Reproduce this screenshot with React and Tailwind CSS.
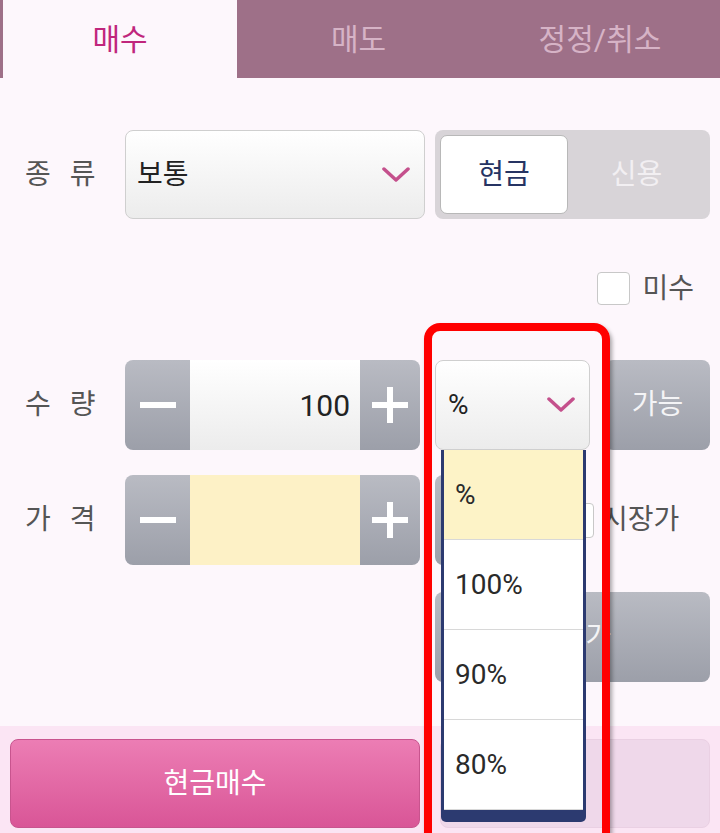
import React from "react";

const Chevron = ({ className = "" }) => (
  <svg width="28" height="16" viewBox="0 0 28 16" className={className}>
    <polyline points="2,2 14,13 26,2" fill="none" stroke="#c4508c" strokeWidth="3.5" strokeLinecap="round" strokeLinejoin="round" />
  </svg>
);

const Minus = () => <div className="w-[36px] h-[6px] bg-white" />;

const Plus = () => (
  <div className="relative w-[36px] h-[36px]">
    <div className="absolute left-0 top-[15px] w-[36px] h-[6px] bg-white" />
    <div className="absolute left-[15px] top-0 w-[6px] h-[36px] bg-white" />
  </div>
);

const Label = ({ a, b }) => (
  <div className="w-[125px] pl-[25px] flex gap-[19px] text-[28px] text-[#555]">
    <span>{a}</span>
    <span>{b}</span>
  </div>
);

const Stepper = ({ value, yellow }) => (
  <div className="w-[295px] h-full flex rounded-[8px] overflow-hidden">
    <div className="w-[65px] flex items-center justify-center bg-gradient-to-b from-[#b9bbc3] to-[#9c9fa9]">
      <Minus />
    </div>
    <div
      className={`flex-1 flex items-center justify-end pr-[10px] text-[30px] text-[#222] ${
        yellow ? "bg-[#fdf1c6]" : "bg-gradient-to-b from-white to-[#ececec]"
      }`}
    >
      {value}
    </div>
    <div className="w-[60px] flex items-center justify-center bg-gradient-to-b from-[#b9bbc3] to-[#9c9fa9]">
      <Plus />
    </div>
  </div>
);

const grayBtn = "bg-gradient-to-b from-[#b9bbc3] to-[#9c9fa9] rounded-[8px]";

export default function App() {
  const options = ["%", "100%", "90%", "80%"];
  return (
    <div className="relative w-[720px] h-[833px] overflow-hidden bg-[#fdf7fc] flex flex-col font-['Roboto','Noto_Sans_CJK_KR',sans-serif]">
      {/* tabs */}
      <div className="h-[78px] flex bg-[#9e7088] text-[30px]">
        <div className="ml-[3px] w-[234px] bg-[#fdf7fc] flex items-center justify-center text-[#c0267c]">매수</div>
        <div className="w-[243px] flex items-center justify-center text-[#d6b3c6]">매도</div>
        <div className="w-[240px] flex items-center justify-center text-[#d6b3c6]">정정/취소</div>
      </div>

      {/* 종류 */}
      <div className="mt-[52px] h-[89px] flex items-center">
        <Label a="종" b="류" />
        <div className="w-[300px] h-full flex items-center justify-between pl-[11px] pr-[14px] rounded-[8px] border border-[#cfcfcf] bg-gradient-to-b from-white to-[#ececec] text-[28px] text-[#222]">
          <span>보통</span>
          <Chevron />
        </div>
        <div className="ml-[10px] w-[275px] h-full flex items-center p-[5px] rounded-[8px] bg-[#d8d4d8]">
          <div className="w-[128px] h-full flex items-center justify-center rounded-[7px] bg-white border border-[#b8b8b8] text-[28px] text-[#263463]">
            현금
          </div>
          <div className="flex-1 flex items-center justify-center text-[28px] text-[#f2eff2]">신용</div>
        </div>
      </div>

      {/* 미수 */}
      <div className="mt-[53px] h-[33px] flex items-center justify-end pr-[26px] gap-[12px]">
        <div className="w-[33px] h-[33px] rounded-[4px] bg-white border border-[#c8c8c8]" />
        <span className="text-[28px] text-[#555]">미수</span>
      </div>

      {/* 수량 */}
      <div className="mt-[55px] h-[90px] flex items-center">
        <Label a="수" b="량" />
        <Stepper value="100" />
        <div className="ml-[15px] w-[155px] h-full flex items-center justify-between pl-[12px] pr-[14px] rounded-[8px] border border-[#cfcfcf] bg-gradient-to-b from-white to-[#ececec] text-[28px] text-[#222]">
          <span>%</span>
          <Chevron />
        </div>
        <div className={`ml-[15px] w-[105px] h-full flex items-center justify-center text-[28px] text-[#f4f4f6] ${grayBtn}`}>
          가능
        </div>
      </div>

      {/* 가격 */}
      <div className="mt-[25px] h-[90px] flex items-center">
        <Label a="가" b="격" />
        <Stepper value="" yellow />
        <div className={`ml-[15px] w-[115px] h-full ${grayBtn}`} />
        <div className="ml-[10px] w-[34px] h-[35px] rounded-[4px] bg-white border border-[#c8c8c8]" />
        <span className="ml-[8px] text-[28px] text-[#555]">시장가</span>
      </div>

      {/* row 3 */}
      <div className="mt-[27px] h-[90px] flex items-center pl-[435px]">
        <div className={`w-[275px] h-full flex items-center justify-center text-[28px] text-[#f4f4f6] ${grayBtn}`}>
          현재가
        </div>
      </div>

      {/* bottom bar */}
      <div className="mt-auto h-[107px] bg-[#fbe5f4] flex pt-[13px] pl-[10px] pb-[5px]">
        <div className="w-[410px] h-[89px] flex items-center justify-center rounded-[8px] border border-[#c8548e] bg-gradient-to-b from-[#ec7db4] to-[#d95597] text-[28px] text-white">
          현금매수
        </div>
        <div className="ml-[20px] w-[270px] h-[89px] rounded-[8px] border border-[#ead0e3] bg-[#efd8ea]" />
      </div>

      {/* dropdown list */}
      <div className="absolute left-[441px] top-[450px] w-[145px] flex flex-col">
        <div className="border-x-[3px] border-[#2c3a70] flex flex-col bg-white">
          {options.map((o, i) => (
            <div
              key={o}
              className={`h-[90px] flex items-center pl-[11px] text-[28px] text-[#2a2a2a] border-b border-[#d8d8d8] ${
                i === 0 ? "bg-[#fdf3c7]" : "bg-white"
              }`}
            >
              {o}
            </div>
          ))}
        </div>
        <div className="h-[12px] bg-[#2c3a70] rounded-b-[5px]" />
      </div>

      {/* red highlight frame */}
      <div className="absolute left-[424px] top-[323px] w-[186px] h-[560px] rounded-[16px] border-[8px] border-[#ff0000] shadow-[2px_3px_4px_rgba(0,0,0,0.35)]" />
    </div>
  );
}
